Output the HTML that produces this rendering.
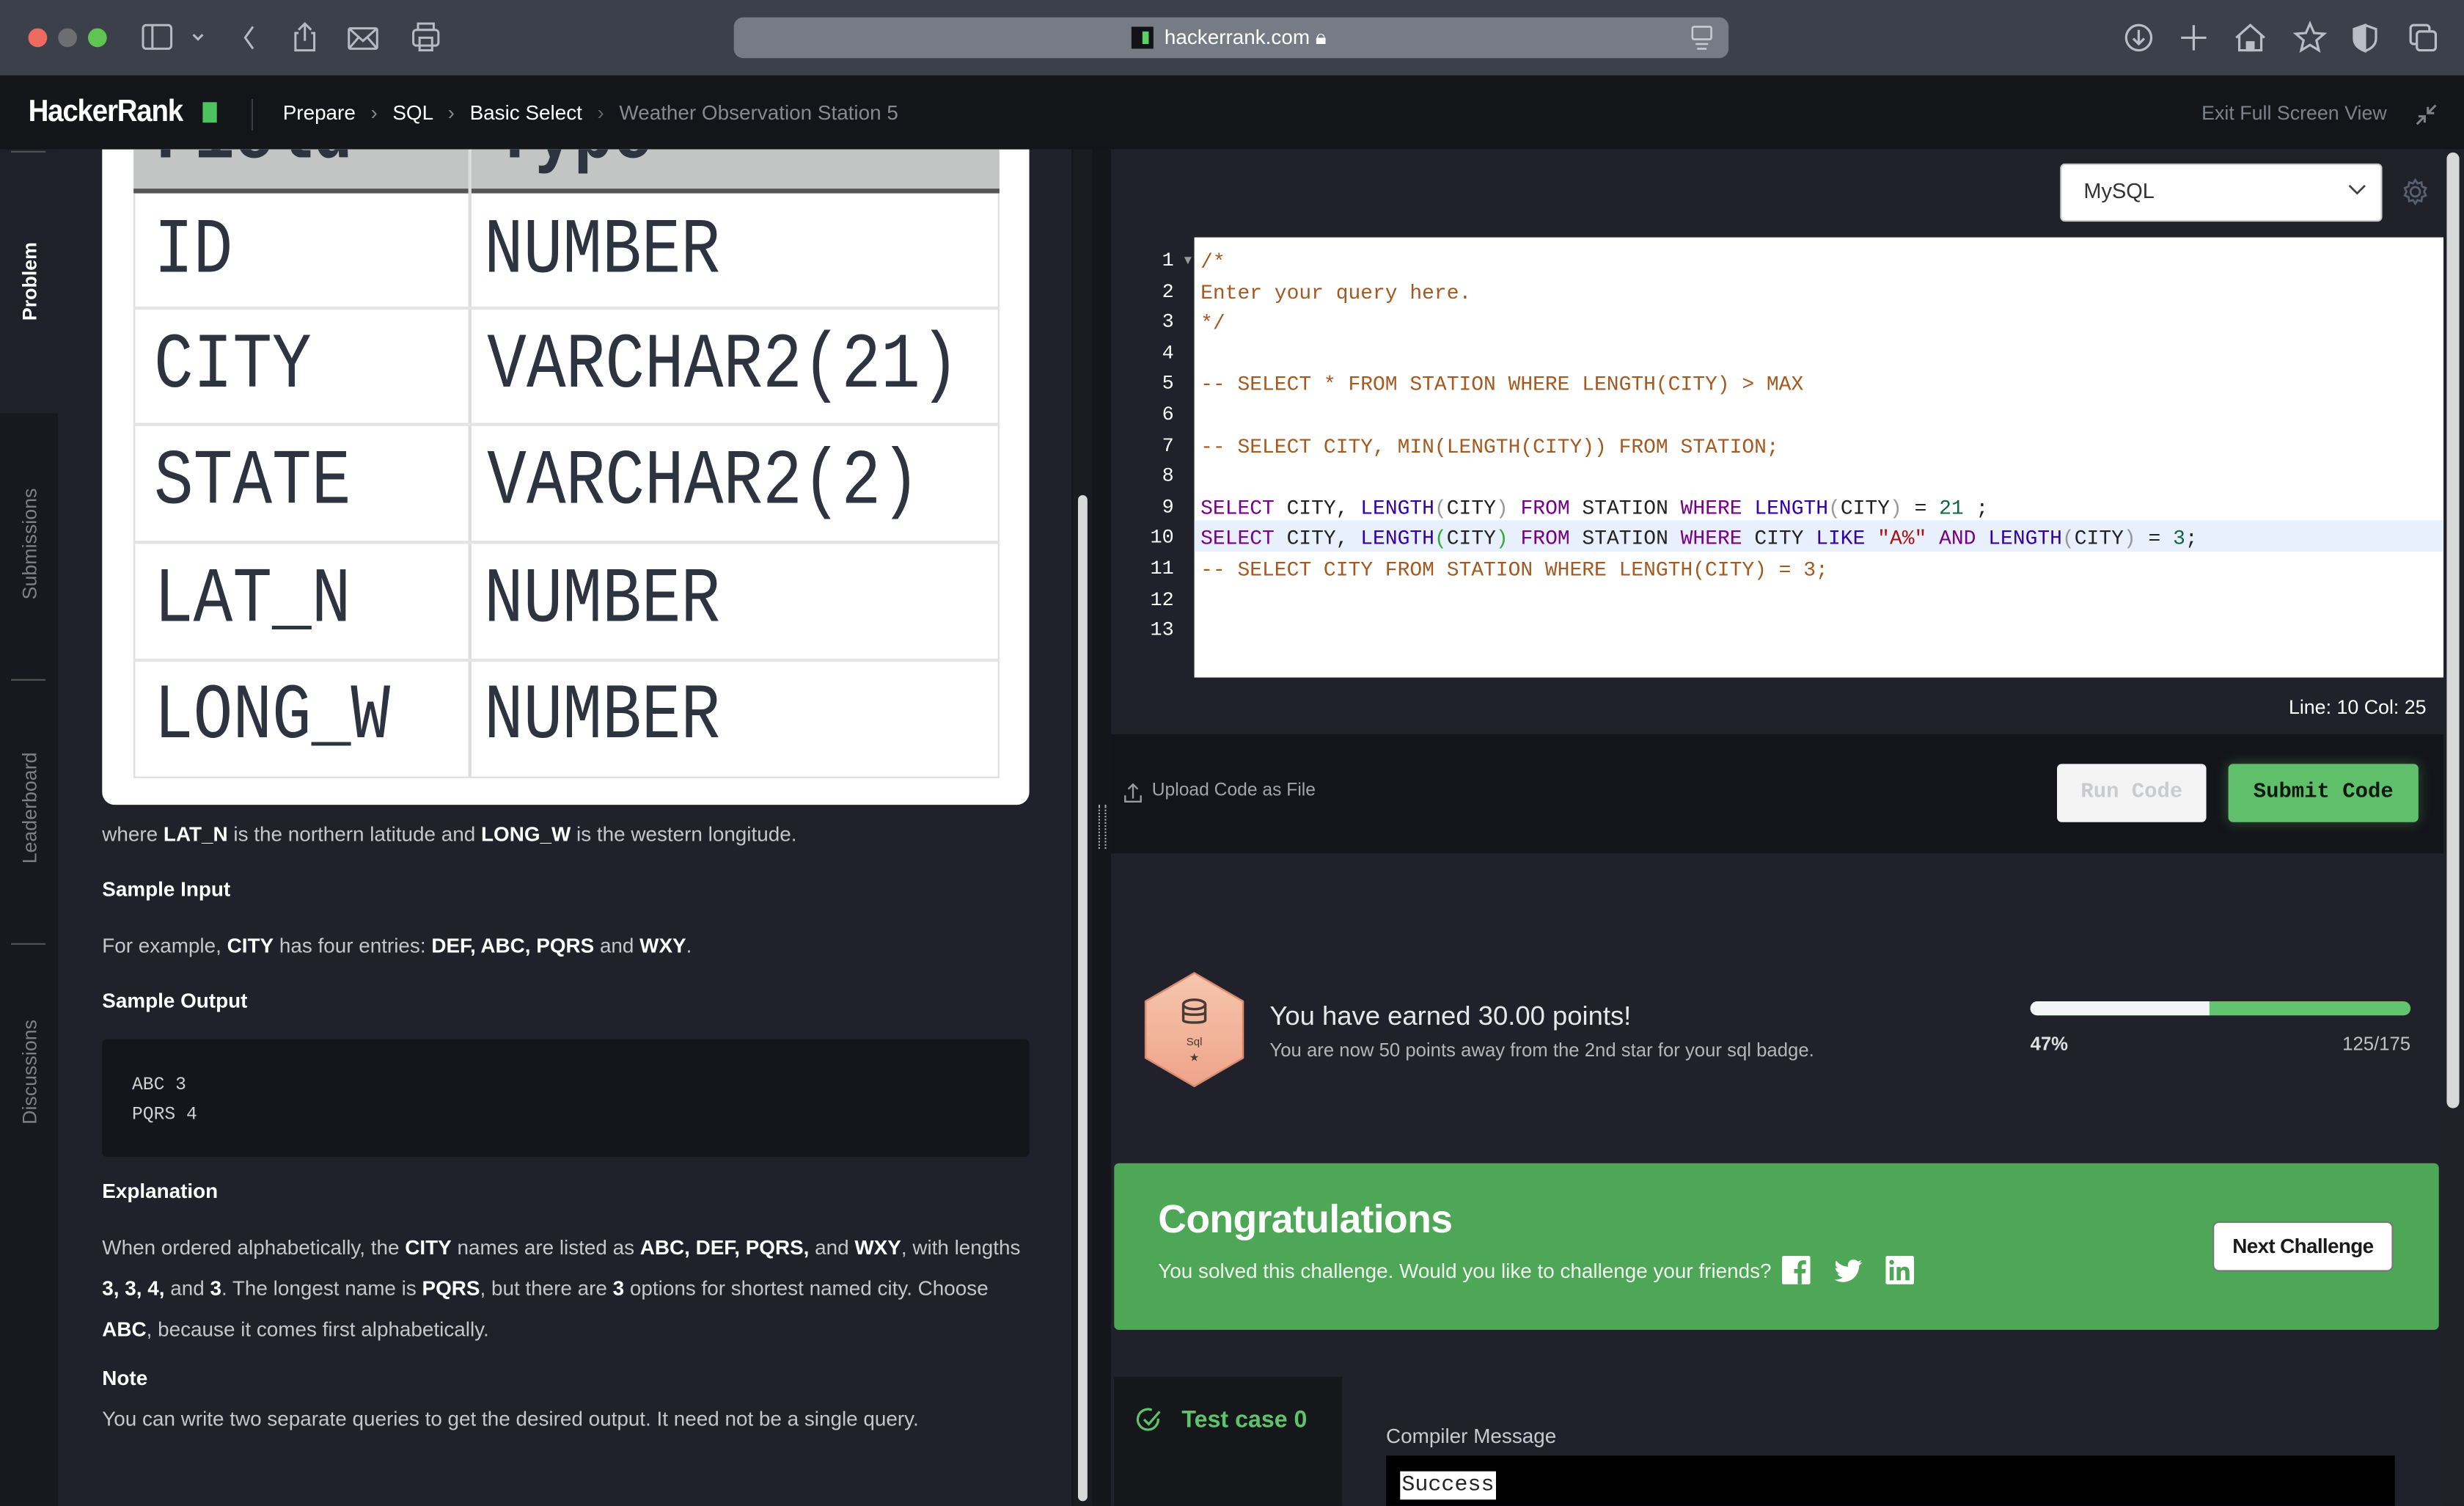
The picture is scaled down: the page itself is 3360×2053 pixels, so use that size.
<!DOCTYPE html>
<html><head><meta charset="utf-8">
<style>
*{margin:0;padding:0;box-sizing:border-box}
html,body{width:3360px;height:2052px;overflow:hidden;background:#20212b}
#w{position:absolute;left:0;top:0;width:1568px;height:958px;transform:scale(2.142857);transform-origin:0 0;font-family:"Liberation Sans",sans-serif;overflow:hidden;background:#20212b}
.a{position:absolute}
.t{position:absolute;white-space:nowrap}
.m{font-family:"Liberation Mono",monospace}
.cm{color:#a5591f}.kw{color:#770088}.bi{color:#3300aa}.st{color:#aa1111}.nu{color:#116644}.pg{color:#999}.pgr{color:#3a3}
.vt{position:absolute;transform:rotate(-90deg);transform-origin:center;white-space:nowrap;font-size:12.5px;text-align:center;width:120px;left:-41px}
.cell{position:absolute;font-family:"Liberation Mono",monospace;font-size:50px;color:#2d3440;transform:scaleX(.835);transform-origin:0 0;line-height:50px}
p.d{position:absolute;left:65px;font-size:13px;color:#c5c7cc;white-space:nowrap}
p.d b{color:#fff}
</style></head><body><div id="w">

<!-- browser bar -->
<div class="a" style="left:0;top:0;width:1568px;height:48px;background:#3c404b"></div>
<div class="a" style="left:18px;top:18px;width:12px;height:12px;border-radius:50%;background:#ed6a5e"></div>
<div class="a" style="left:37px;top:18px;width:12px;height:12px;border-radius:50%;background:#6d6e72"></div>
<div class="a" style="left:56px;top:18px;width:12px;height:12px;border-radius:50%;background:#5fc452"></div>
<svg class="a" style="left:88px;top:12px" width="200" height="24" fill="none" stroke="#b6bac3" stroke-width="1.4">
<rect x="3" y="4" width="18" height="15" rx="2"/><line x1="9" y1="4" x2="9" y2="19"/>
<path d="M35 10l3 3 3-3"/>
<path d="M73 5l-5 7 5 7"/>
<path d="M106 3v11M102 7l4-4 4 4M102 9h-2v11h12v-11h-2"/>
<rect x="134" y="6" width="18" height="13" rx="1"/><path d="M134 6l9 8 9-8M134 19l6-7M152 19l-6-7"/>
<rect x="175" y="7" width="16" height="10" rx="2"/><rect x="178" y="3" width="10" height="4"/><rect x="179" y="12" width="8" height="8"/>
</svg>
<div class="a" style="left:467px;top:11px;width:633px;height:26px;border-radius:6px;background:#767b86"></div>
<div class="a" style="left:720px;top:17px;width:14px;height:14px;background:#121318"></div>
<div class="a" style="left:727px;top:20px;width:4px;height:8px;background:#5bd067"></div>
<div class="t" style="left:741px;top:16px;font-size:13px;color:#fff">hackerrank.com 🔒︎</div>
<svg class="a" style="left:1076px;top:16px" width="14" height="16" fill="none" stroke="#c8ccd3" stroke-width="1.2"><rect x="1" y="1" width="12" height="8" rx="1"/><line x1="3" y1="12" x2="11" y2="12"/><line x1="4" y1="15" x2="10" y2="15"/></svg>
<svg class="a" style="left:1350px;top:12px" width="210" height="24" fill="none" stroke="#b9bdc6" stroke-width="1.5">
<circle cx="11" cy="12" r="8"/><path d="M11 7v9M7.5 12.5l3.5 3.5 3.5-3.5"/>
<path d="M46 4v16M38 12h16"/>
<path d="M73 12l9-8 9 8M75 10v10h14v-10M80 20v-5h4v5"/><rect x="80" y="15" width="4" height="5" fill="#b9bdc6"/>
<path d="M120 3l2.6 6 6.4.5-4.9 4.2 1.5 6.3-5.6-3.4-5.6 3.4 1.5-6.3-4.9-4.2 6.4-.5z"/>
<path d="M155 4l7 2.5v6c0 4-3 6.5-7 8-4-1.5-7-4-7-8v-6z"/><path d="M155 4v16.5c-4-1.5-7-4-7-8v-6z" fill="#b9bdc6"/>
<rect x="184" y="4" width="12" height="12" rx="2"/><rect x="188" y="8" width="12" height="12" rx="2" fill="#3c404b"/>
</svg>

<!-- HR header -->
<div class="a" style="left:0;top:48px;width:1568px;height:47px;background:#141519"></div>
<div class="t" style="left:18px;top:60px;font-size:19.5px;font-weight:bold;color:#fff;letter-spacing:-.6px;transform:scaleX(.92);transform-origin:0 0">HackerRank</div>
<div class="a" style="left:129px;top:65px;width:9px;height:13px;background:#4ec25e"></div>
<div class="a" style="left:160px;top:63px;width:1px;height:20px;background:#3a3c44"></div>
<div class="t" style="left:180px;top:64px;font-size:13px;color:#fff">Prepare <span style="color:#888;margin:0 6px">›</span> SQL <span style="color:#888;margin:0 6px">›</span> Basic Select <span style="color:#666;margin:0 6px">›</span> <span style="color:#878a91">Weather Observation Station 5</span></div>
<div class="t" style="left:1401px;top:65px;font-size:12.5px;color:#7d8389">Exit Full Screen View</div>
<svg class="a" style="left:1536px;top:65px" width="16" height="16" fill="none" stroke="#7d8389" stroke-width="1.4"><path d="M14 2l-5 5M9 3v4h4M2 14l5-5M3 9h4v4"/></svg>

<!-- sidebar -->
<div class="a" style="left:0;top:95px;width:37px;height:863px;background:#18191f"></div>
<div class="a" style="left:0;top:95px;width:37px;height:168px;background:#1f2029"></div>
<div class="a" style="left:7px;top:96px;width:22px;height:1px;background:#555"></div>
<div class="a" style="left:7px;top:432px;width:22px;height:1px;background:#555"></div>
<div class="a" style="left:7px;top:600px;width:22px;height:1px;background:#555"></div>
<div class="vt" style="top:172px;color:#fff;font-weight:bold">Problem</div>
<div class="vt" style="top:339px;color:#7d8088">Submissions</div>
<div class="vt" style="top:507px;color:#7d8088">Leaderboard</div>
<div class="vt" style="top:675px;color:#7d8088">Discussions</div>

<!-- left content -->
<div class="a" style="left:37px;top:95px;width:645px;height:863px;background:#20212b"></div>
<div class="a" style="left:65px;top:95px;width:590px;height:417px;background:#fff;border-radius:0 0 8px 8px;overflow:hidden">
 <div class="a" style="left:20px;top:0;width:551px;height:26px;background:#c3c5c4;overflow:hidden">
  <div class="cell" style="left:14px;top:-32px;font-weight:bold">Field</div>
  <div class="cell" style="left:230px;top:-32px;font-weight:bold">Type</div>
 </div>
 <div class="a" style="left:20px;top:25px;width:551px;height:3px;background:#555"></div>
 <div class="a" style="left:20px;top:28px;width:551px;height:372px;border:1px solid #ddd;border-top:none"></div>
 <div class="a" style="left:233px;top:0;width:2px;height:400px;background:#ddd"></div>
 <div class="a" style="left:20px;top:100px;width:551px;height:2px;background:#e3e3e3"></div>
 <div class="a" style="left:20px;top:174px;width:551px;height:2px;background:#e3e3e3"></div>
 <div class="a" style="left:20px;top:249px;width:551px;height:2px;background:#e3e3e3"></div>
 <div class="a" style="left:20px;top:324px;width:551px;height:2px;background:#e3e3e3"></div>
 <div class="cell" style="left:33px;top:41px">ID</div><div class="cell" style="left:243px;top:41px">NUMBER</div>
 <div class="cell" style="left:33px;top:114px">CITY</div><div class="cell" style="left:245px;top:114px">VARCHAR2(21)</div>
 <div class="cell" style="left:33px;top:188px">STATE</div><div class="cell" style="left:245px;top:188px">VARCHAR2(2)</div>
 <div class="cell" style="left:33px;top:263px">LAT_N</div><div class="cell" style="left:243px;top:263px">NUMBER</div>
 <div class="cell" style="left:33px;top:337px">LONG_W</div><div class="cell" style="left:243px;top:337px">NUMBER</div>
</div>
<p class="d" style="top:523px">where <b>LAT_N</b> is the northern latitude and <b>LONG_W</b> is the western longitude.</p>
<p class="d" style="top:558px;color:#fff;font-weight:bold">Sample Input</p>
<p class="d" style="top:594px">For example, <b>CITY</b> has four entries: <b>DEF, ABC, PQRS</b> and <b>WXY</b>.</p>
<p class="d" style="top:629px;color:#fff;font-weight:bold">Sample Output</p>
<div class="a" style="left:65px;top:661px;width:590px;height:75px;background:#15161b;border-radius:3px"></div>
<div class="t m" style="left:84px;top:682px;font-size:11.5px;color:#d0d0d0;line-height:18.5px">ABC 3<br>PQRS 4</div>
<p class="d" style="top:750px;color:#fff;font-weight:bold">Explanation</p>
<p class="d" style="top:786px">When ordered alphabetically, the <b>CITY</b> names are listed as <b>ABC, DEF, PQRS,</b> and <b>WXY</b>, with lengths</p>
<p class="d" style="top:812px"><b>3, 3, 4,</b> and <b>3</b>. The longest name is <b>PQRS</b>, but there are <b>3</b> options for shortest named city. Choose</p>
<p class="d" style="top:838px"><b>ABC</b>, because it comes first alphabetically.</p>
<p class="d" style="top:869px;color:#fff;font-weight:bold">Note</p>
<p class="d" style="top:895px">You can write two separate queries to get the desired output. It need not be a single query.</p>

<!-- divider -->
<div class="a" style="left:682px;top:95px;width:25px;height:863px;background:#15161b"></div>
<div class="a" style="left:683px;top:95px;width:12px;height:863px;background:#1b1c22"></div>
<div class="a" style="left:686px;top:315px;width:6px;height:640px;border-radius:3px;background:#d9d9d9"></div>
<div class="a" style="left:699px;top:512px;width:5px;height:28px;border-left:1px dotted #aaa;border-right:1px dotted #aaa"></div>

<!-- right panel -->
<div class="a" style="left:707px;top:95px;width:848px;height:372px;background:#20212b"></div>
<div class="a" style="left:1311px;top:104px;width:205px;height:37px;background:#fff;border-radius:3px;border:1px solid #ccc"></div>
<div class="t" style="left:1326px;top:114px;font-size:13.5px;color:#333">MySQL</div>
<svg class="a" style="left:1493px;top:116px" width="14" height="10" fill="none" stroke="#444" stroke-width="1.3"><path d="M2 2l5 5 5-5"/></svg>
<svg class="a" style="left:1528px;top:113px" width="18" height="18" fill="none" stroke="#5b6070" stroke-width="1.3"><circle cx="9" cy="9" r="3"/><path d="M9 1.5l1.4 2.2 2.5-.7.4 2.6 2.4 1-1.1 2.4 1.1 2.4-2.4 1-.4 2.6-2.5-.7L9 16.5l-1.4-2.2-2.5.7-.4-2.6-2.4-1L3.4 9 2.300 6.6l2.4-1 .4-2.6 2.5.7z"/></svg>
<div class="a" style="left:760px;top:151px;width:795px;height:280px;background:#fff"></div>
<div class="a" style="left:760px;top:331px;width:795px;height:20px;background:#e8f0fd"></div>
<div class="t m" style="left:720px;top:157px;width:27px;text-align:right;font-size:12.5px;line-height:19.6px;color:#fff">1<br>2<br>3<br>4<br>5<br>6<br>7<br>8<br>9<br>10<br>11<br>12<br>13</div>
<div class="t" style="left:752px;top:161px;font-size:8px;color:#999">▼</div>
<div class="t m" style="left:764px;top:157px;font-size:13.05px;line-height:19.6px;color:#222">
<span class="cm">/*</span><br><span class="cm">Enter your query here.</span><br><span class="cm">*/</span><br><br><span class="cm">-- SELECT * FROM STATION WHERE LENGTH(CITY) &gt; MAX</span><br><br><span class="cm">-- SELECT CITY, MIN(LENGTH(CITY)) FROM STATION;</span><br><br><span class="kw">SELECT</span> CITY, <span class="bi">LENGTH</span><span class="pg">(</span>CITY<span class="pg">)</span> <span class="kw">FROM</span> STATION <span class="kw">WHERE</span> <span class="bi">LENGTH</span><span class="pg">(</span>CITY<span class="pg">)</span> = <span class="nu">21</span> ;<br><span class="kw">SELECT</span> CITY, <span class="bi">LENGTH</span><span class="pgr">(</span>CITY<span class="pgr">)</span> <span class="kw">FROM</span> STATION <span class="kw">WHERE</span> CITY <span class="bi">LIKE</span> <span class="st">"A%"</span> <span class="kw">AND</span> <span class="bi">LENGTH</span><span class="pg">(</span>CITY<span class="pg">)</span> = <span class="nu">3</span>;<br><span class="cm">-- SELECT CITY FROM STATION WHERE LENGTH(CITY) = 3;</span></div>
<div class="t" style="left:1400px;top:443px;width:144px;text-align:right;font-size:12.5px;color:#fff">Line: 10 Col: 25</div>
<div class="a" style="left:707px;top:467px;width:848px;height:76px;background:#14151a"></div>
<svg class="a" style="left:715px;top:497px" width="12" height="14" fill="none" stroke="#9a9da5" stroke-width="1.1"><path d="M6 11V2M3 5l3-3 3 3M1 9v4h10V9"/></svg>
<div class="t" style="left:733px;top:497px;font-size:11.5px;color:#a2a5ad">Upload Code as File</div>
<div class="a" style="left:1309px;top:486px;width:95px;height:37px;background:#f4f4f4;border-radius:3px"></div>
<div class="t m" style="left:1309px;top:497px;width:95px;text-align:center;font-size:13.5px;font-weight:bold;color:#c9cbcd">Run Code</div>
<div class="a" style="left:1418px;top:486px;width:121px;height:37px;background:#5fbf6b;border-radius:3px;box-shadow:0 0 8px rgba(95,191,107,.35)"></div>
<div class="t m" style="left:1418px;top:497px;width:121px;text-align:center;font-size:13.5px;font-weight:bold;color:#0e1a10">Submit Code</div>

<div class="a" style="left:707px;top:543px;width:848px;height:415px;background:#20212b"></div>
<svg class="a" style="left:725px;top:617px" width="70" height="76"><defs><linearGradient id="g" x1="0" y1="0" x2="0" y2="1"><stop offset="0" stop-color="#f6c6ae"/><stop offset="1" stop-color="#eea48a"/></linearGradient></defs><path d="M35 2L66 20V56L35 74L4 56V20Z" fill="url(#g)" stroke="#d98c70" stroke-width="1.2" stroke-linejoin="round"/>
<g fill="none" stroke="#4a3a36" stroke-width="1.6"><ellipse cx="35" cy="22" rx="7" ry="3"/><path d="M28 22v10c0 2 14 2 14 0V22M28 27c0 2 14 2 14 0"/></g>
<text x="35" y="48" font-size="7" fill="#4a3a36" text-anchor="middle" font-family="Liberation Sans">Sql</text><text x="35" y="58" font-size="7" fill="#4a3a36" text-anchor="middle">★</text></svg>
<div class="t" style="left:808px;top:637px;font-size:17px;color:#e8e8ea">You have earned 30.00 points!</div>
<div class="t" style="left:808px;top:661px;font-size:12px;color:#b4b6bc">You are now 50 points away from the 2nd star for your sql badge.</div>
<div class="a" style="left:1292px;top:637px;width:242px;height:9px;border-radius:5px;background:#62c46f;overflow:hidden"><div style="width:114px;height:9px;background:#f4f5f7"></div></div>
<div class="t" style="left:1292px;top:657px;font-size:12px;color:#e0e0e0;font-weight:bold">47%</div>
<div class="t" style="left:1460px;top:657px;width:74px;text-align:right;font-size:12px;color:#c0c2c7">125/175</div>

<div class="a" style="left:709px;top:740px;width:843px;height:106px;background:#4ea657;border-radius:3px"></div>
<div class="t" style="left:737px;top:762px;font-size:25px;font-weight:bold;color:#fff;letter-spacing:-.3px">Congratulations</div>
<div class="t" style="left:737px;top:801px;font-size:13px;color:#f0f8f0">You solved this challenge. Would you like to challenge your friends?</div>
<svg class="a" style="left:1134px;top:798px" width="90" height="22">
<rect x="0" y="1" width="18" height="18" rx="1" fill="#fff"/><path d="M12.5 19V12h2.3l.4-2.7h-2.7V7.6c0-.8.3-1.3 1.4-1.3h1.4V3.9c-.3 0-1.1-.1-2-.1-2 0-3.3 1.2-3.3 3.4v2.1H7.7V12H10v7z" fill="#4ea657"/>
<path d="M51 5c-.7.3-1.4.5-2.1.6.8-.5 1.3-1.2 1.6-2-.7.4-1.5.7-2.3.9A3.6 3.6 0 0 0 42 7.8c-3-.1-5.700-1.6-7.5-3.8-1 1.7-.5 3.8 1.1 4.9-.6 0-1.2-.2-1.6-.5 0 1.8 1.2 3.3 2.9 3.6-.5.2-1.1.2-1.6.1.5 1.5 1.9 2.5 3.4 2.5A7.3 7.3 0 0 1 33.3 16c1.6 1 3.5 1.6 5.5 1.6 6.7 0 10.4-5.600 10.3-10.6.7-.5 1.3-1.1 1.9-2z" fill="#fff"/>
<rect x="66" y="1" width="18" height="18" rx="1" fill="#fff"/><rect x="68.5" y="8" width="2.6" height="8.5" fill="#4ea657"/><circle cx="69.8" cy="5" r="1.5" fill="#4ea657"/><path d="M73 8h2.5v1.2c.5-.8 1.4-1.4 2.6-1.4 2.3 0 3 1.5 3 3.6v5.1h-2.6v-4.6c0-1-.2-1.9-1.3-1.9s-1.6.8-1.6 1.9v4.6H73z" fill="#4ea657"/></svg>
<div class="a" style="left:1408px;top:777px;width:115px;height:32px;background:#fff;border-radius:4px;border:1px solid #777"></div>
<div class="t" style="left:1408px;top:785px;width:115px;text-align:center;font-size:13px;color:#1a1a1a;font-weight:bold;letter-spacing:-.3px">Next Challenge</div>

<div class="a" style="left:709px;top:876px;width:145px;height:82px;background:#16171b"></div>
<svg class="a" style="left:723px;top:895px" width="16" height="16" fill="none" stroke="#5ec46a" stroke-width="1.5"><path d="M14 7.5A6.5 6.5 0 1 1 10 2"/><path d="M5 8l3 3 7-8"/></svg>
<div class="t" style="left:752px;top:895px;font-size:15px;font-weight:bold;color:#5ec46a">Test case 0</div>
<div class="t" style="left:882px;top:906px;font-size:13px;color:#c8cace">Compiler Message</div>
<div class="a" style="left:882px;top:926px;width:642px;height:32px;background:#000"></div>
<div class="t m" style="left:891px;top:936px;background:#fff;color:#222;font-size:14px;line-height:18px;padding:0 1px">Success</div>

<div class="a" style="left:1555px;top:95px;width:13px;height:863px;background:#1f2028"></div>
<div class="a" style="left:1557px;top:97px;width:8px;height:608px;border-radius:4px;background:#d8d8d8"></div>
</div></body></html>
